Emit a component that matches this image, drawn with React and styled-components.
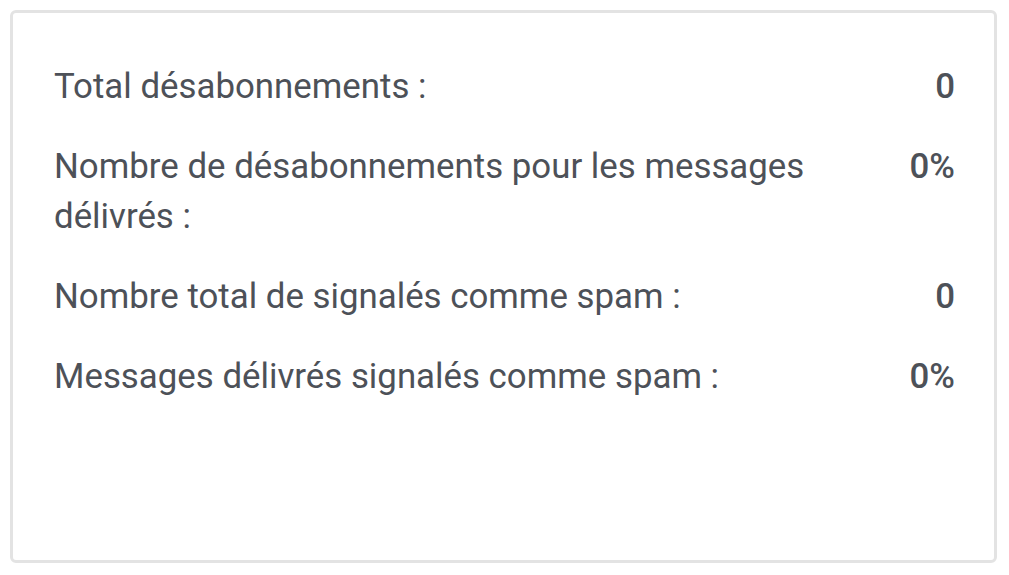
import React from "react";
import styled, { createGlobalStyle } from "styled-components";

const GlobalStyle = createGlobalStyle`
  body {
    margin: 0;
    padding: 10px;
    background: #ffffff;
    font-family: Roboto, "Liberation Sans", sans-serif;
  }
`;

const stats = [
  { label: "Total désabonnements :", value: "0" },
  { label: "Nombre de désabonnements pour les messages délivrés :", value: "0%" },
  { label: "Nombre total de signalés comme spam :", value: "0" },
  { label: "Messages délivrés signalés comme spam :", value: "0%" },
];

function App() {
  return (
    <>
      <GlobalStyle />
      <Card>
        {stats.map((s) => (
          <Row key={s.label}>
            <Label>{s.label}</Label>
            <Value>{s.value}</Value>
          </Row>
        ))}
      </Card>
    </>
  );
}

export default App;

const Card = styled.div`
  box-sizing: border-box;
  width: 987px;
  height: 553px;
  border: 3px solid #e3e3e3;
  border-radius: 6px;
  padding: 49px 39px 0 41px;
  display: flex;
  flex-direction: column;
  gap: 30px;
`;

const Row = styled.div`
  display: grid;
  grid-template-columns: 1fr auto;
  column-gap: 60px;
  align-items: start;
  font-size: 34.85px;
  line-height: 50px;
  color: #4d5158;
`;

const Label = styled.span``;

const Value = styled.span`
  font-weight: 500;
  text-align: right;
`;
